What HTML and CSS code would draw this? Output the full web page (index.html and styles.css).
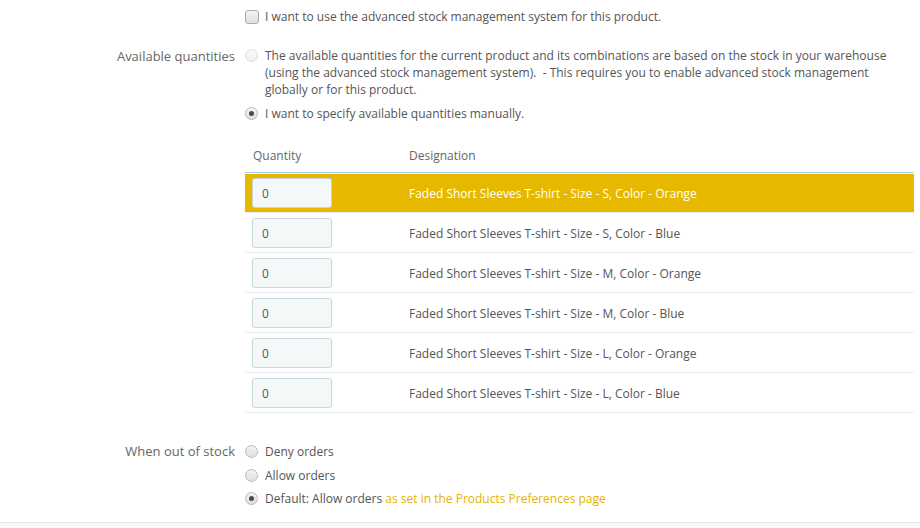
FILE: index.html
```html
<!DOCTYPE html>
<html>
<head>
<meta charset="utf-8">
<link rel="stylesheet" href="styles.css">
</head>
<body>
<div class="page">
  <div class="form-row first">
    <div class="label"></div>
    <div class="control">
      <label class="opt"><span class="box check"></span><span>I want to use the advanced stock management system for this product.</span></label>
    </div>
  </div>

  <div class="form-row qty">
    <div class="label">Available quantities</div>
    <div class="control">
      <label class="opt disabled"><span class="box radio"></span><span>The available quantities for the current product and its combinations are based on the stock in your warehouse<br>(using the advanced stock management system).&nbsp; - This requires you to enable advanced stock management<br>globally or for this product.</span></label>
      <label class="opt second"><span class="box radio on"></span><span>I want to specify available quantities manually.</span></label>
    </div>
  </div>

  <div class="form-row table-row">
    <div class="label"></div>
    <div class="control">
      <table class="qtable">
        <thead>
          <tr><th class="c-qty">Quantity</th><th>Designation</th></tr>
        </thead>
        <tbody>
          <tr class="hl"><td class="c-qty"><span class="inp">0</span></td><td>Faded Short Sleeves T-shirt - Size - S, Color - Orange</td></tr>
          <tr><td class="c-qty"><span class="inp">0</span></td><td>Faded Short Sleeves T-shirt - Size - S, Color - Blue</td></tr>
          <tr><td class="c-qty"><span class="inp">0</span></td><td>Faded Short Sleeves T-shirt - Size - M, Color - Orange</td></tr>
          <tr><td class="c-qty"><span class="inp">0</span></td><td>Faded Short Sleeves T-shirt - Size - M, Color - Blue</td></tr>
          <tr><td class="c-qty"><span class="inp">0</span></td><td>Faded Short Sleeves T-shirt - Size - L, Color - Orange</td></tr>
          <tr><td class="c-qty"><span class="inp">0</span></td><td>Faded Short Sleeves T-shirt - Size - L, Color - Blue</td></tr>
        </tbody>
      </table>
    </div>
  </div>

  <div class="form-row oos">
    <div class="label">When out of stock</div>
    <div class="control radios">
      <label class="opt"><span class="box radio"></span><span>Deny orders</span></label>
      <label class="opt"><span class="box radio"></span><span>Allow orders</span></label>
      <label class="opt"><span class="box radio on"></span><span>Default: Allow orders <a class="link" href="#">as set in the Products Preferences page</a></span></label>
    </div>
  </div>
</div>
<div class="footer"></div>
</body>
</html>
```

FILE: styles.css
```css
html, body {
  margin: 0;
  padding: 0;
  background: #fff;
}
body {
  font-family: "Open Sans", "Liberation Sans", sans-serif;
  font-size: 12px;
  line-height: 17px;
  color: #555;
  height: 528px;
  overflow: hidden;
}
.page {
  padding: 8px 6px 0 0;
  height: 522px;
  box-sizing: border-box;
}
.form-row {
  display: grid;
  grid-template-columns: 235px 1fr;
  column-gap: 10px;
}
.label {
  text-align: right;
  color: #666;
  font-size: 13px;
  line-height: 17px;
}
.form-row.qty .label { padding-top: 1px; }
.form-row.first { margin-bottom: 22px; }
.form-row.qty { margin-bottom: 17px; }
.form-row.table-row { margin-bottom: 30px; }
.opt {
  display: flex;
  align-items: flex-start;
}
.opt .box {
  flex: none;
  width: 13px;
  height: 13px;
  margin: 2px 7px 0 0;
  box-sizing: border-box;
  border: 1px solid #b9b9b9;
  background: linear-gradient(#f4f4f4, #dedede);
  position: relative;
}
.box.check { border-radius: 3px; border-color: #adadad; width: 14px; height: 14px; margin-right: 6px; }
.box.radio { border-radius: 50%; }
.box.radio.on::after {
  content: "";
  position: absolute;
  left: 3px;
  top: 3px;
  width: 5px;
  height: 5px;
  border-radius: 50%;
  background: #4a4a4a;
}
.opt.disabled .box {
  border-color: #dcdcdc;
  background: linear-gradient(#fafafa, #efefef);
}
.opt.second { margin-top: 7px; }
.radios .opt + .opt { margin-top: 6.5px; }
.qtable {
  width: 100%;
  border-collapse: collapse;
}
.qtable th {
  text-align: left;
  font-weight: normal;
  color: #666;
  padding: 8px 8px 8px 8px;
  border-bottom: 1px solid #a8d4ee;
}
.qtable th.c-qty { width: 140px; }
.qtable td {
  padding: 5px 8px 4px 8px;
  border-bottom: 1px solid #eaedef;
  vertical-align: middle;
}
.qtable td.c-qty { padding-left: 7px; padding-right: 9px; }
.qtable tr.hl td {
  background: #e6b800;
  color: #fff;
  box-shadow: inset 0 1px 0 #fff;
}
.inp {
  display: block;
  width: 80px;
  height: 30px;
  box-sizing: border-box;
  border: 1px solid #c7d6db;
  border-radius: 3px;
  background: #f5f8f9;
  color: #555;
  padding: 6px 9px;
  line-height: 17px;
}
.link {
  color: #e6b400;
  text-decoration: none;
}
.footer {
  height: 6px;
  border-top: 1px solid #e4e8ea;
  background: #f6f8f9;
}
```
